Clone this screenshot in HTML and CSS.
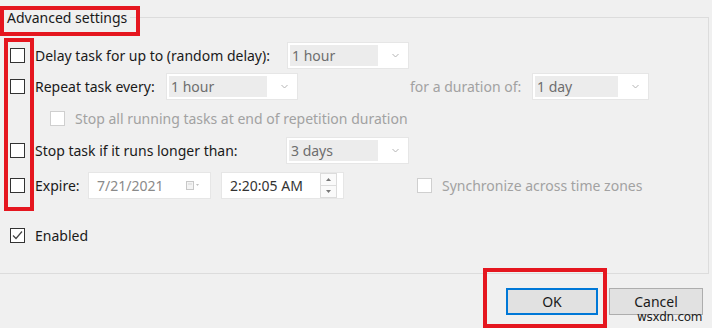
FILE: index.html
```html
<!DOCTYPE html>
<html>
<head>
<meta charset="utf-8">
<link rel="stylesheet" href="styles.css">
</head>
<body>
<div class="dialog">
  <div class="group">
    <div class="legend">Advanced settings</div>

    <div class="row row1">
      <span class="cb"></span>
      <span class="lbl lbl-delay">Delay task for up to (random delay):</span>
      <div class="combo combo-delay"><span class="val">1 hour</span><svg class="chev" width="7" height="5" viewBox="0 0 7 5"><path d="M0.5 1 L3.5 4 L6.5 1" fill="none" stroke="#b4b4b4" stroke-width="1"/></svg></div>
    </div>

    <div class="row row2">
      <span class="cb"></span>
      <span class="lbl lbl-repeat">Repeat task every:</span>
      <div class="combo combo-repeat"><span class="val">1 hour</span><svg class="chev" width="7" height="5" viewBox="0 0 7 5"><path d="M0.5 1 L3.5 4 L6.5 1" fill="none" stroke="#b4b4b4" stroke-width="1"/></svg></div>
      <span class="lbl dim lbl-for">for a duration of:</span>
      <div class="combo combo-day"><span class="val">1 day</span><svg class="chev" width="7" height="5" viewBox="0 0 7 5"><path d="M0.5 1 L3.5 4 L6.5 1" fill="none" stroke="#b4b4b4" stroke-width="1"/></svg></div>
    </div>

    <div class="row row3">
      <span class="cb cb-dis"></span>
      <span class="lbl dim">Stop all running tasks at end of repetition duration</span>
    </div>

    <div class="row row4">
      <span class="cb"></span>
      <span class="lbl lbl-stop">Stop task if it runs longer than:</span>
      <div class="combo combo-stop"><span class="val">3 days</span><svg class="chev" width="7" height="5" viewBox="0 0 7 5"><path d="M0.5 1 L3.5 4 L6.5 1" fill="none" stroke="#b4b4b4" stroke-width="1"/></svg></div>
    </div>

    <div class="row row5">
      <span class="cb"></span>
      <span class="lbl lbl-expire">Expire:</span>
      <div class="field date"><span class="dval">7/21/2021</span>
        <svg class="cal" width="14" height="9" viewBox="0 0 14 9"><rect x="0.5" y="0.5" width="7" height="8" fill="#f4f4f4" stroke="#c8c8c8"/><line x1="2" y1="3" x2="6" y2="3" stroke="#d6d6d6"/><path d="M10 3 L13 3 L11.5 5 Z" fill="#c0c0c0"/></svg>
      </div>
      <div class="field time"><span class="tval">2:20:05 AM</span>
        <div class="spin"><span class="sp"><svg width="5" height="3" viewBox="0 0 5 3"><path d="M0 3 L2.5 0 L5 3 Z" fill="#777"/></svg></span><span class="sp"><svg width="5" height="3" viewBox="0 0 5 3"><path d="M0 0 L2.5 3 L5 0 Z" fill="#777"/></svg></span></div>
      </div>
      <span class="cb cb-dis cb-sync"></span>
      <span class="lbl dim">Synchronize across time zones</span>
    </div>

    <div class="row row6">
      <span class="cb cb-on"><svg width="13" height="13" viewBox="0 0 13 13"><path d="M2 6.5 L5 9.5 L11 2.5" fill="none" stroke="#444" stroke-width="1.2"/></svg></span>
      <span class="lbl">Enabled</span>
    </div>
  </div>

  <div class="footer">
    <button class="btn btn-ok">OK</button>
    <button class="btn">Cancel</button>
  </div>

  <span class="watermark">wsxdn.com</span>
  <div class="mark mark-title"></div>
  <div class="mark mark-checks"></div>
  <div class="mark mark-ok"></div>
</div>
</body>
</html>
```

FILE: styles.css
```css
html, body {
  margin: 0;
  padding: 0;
  background: #f0f0f0;
}
body {
  font-family: "Noto Sans", "Open Sans", "DejaVu Sans", sans-serif;
  font-size: 14px;
  color: #1a1a1a;
}
.dialog {
  position: relative;
  width: 712px;
  height: 328px;
  overflow: hidden;
}
.group {
  position: relative;
  box-sizing: border-box;
  margin-top: 17px;
  width: 709px;
  height: 257px;
  border-top: 1px solid #dcdcdc;
  border-right: 1px solid #dcdcdc;
  border-bottom: 1px solid #dcdcdc;
  padding-top: 24px;
}
.legend {
  position: absolute;
  left: 4px;
  top: -10px;
  padding: 0 3px;
  background: #f0f0f0;
  line-height: 20px;
  color: #1a1a1a;
}
.row {
  display: flex;
  align-items: center;
  height: 27px;
  padding-left: 10px;
}
.row2 { margin-top: 4px; }
.row3 { margin-top: 5px; padding-left: 50px; }
.row4 { margin-top: 5px; }
.row5 { margin-top: 8px; }
.row6 { margin-top: 23px; }

.cb {
  box-sizing: border-box;
  width: 15px;
  height: 15px;
  border: 1px solid #333;
  background: #fff;
  margin-right: 10px;
  flex: none;
  display: flex;
  align-items: center;
  justify-content: center;
}
.cb-dis {
  border-color: #cfcfcf;
  background: #fff;
}
.lbl {
  white-space: nowrap;
  flex: none;
}
.dim { color: #a2a2a2; }
.lbl-delay { width: 252px; }
.lbl-repeat { width: 131px; }
.lbl-for { width: 122px; margin-left: 112px; }
.lbl-stop { width: 251px; }
.lbl-expire { width: 53px; }

.combo {
  box-sizing: border-box;
  height: 27px;
  background: #fff;
  border: 1px solid #e6e6e6;
  display: flex;
  align-items: center;
  padding: 2px;
  flex: none;
}
.combo .val {
  height: 100%;
  display: flex;
  align-items: center;
  background: #ececec;
  color: #6e6e6e;
  padding-left: 2px;
  flex: 1;
}
.combo .chev {
  flex: none;
  margin: 0 7px 0 14px;
}
.combo-delay { width: 122px; }
.combo-repeat { width: 132px; }
.combo-day { width: 117px; }
.combo-stop { width: 123px; }

.field {
  box-sizing: border-box;
  height: 27px;
  width: 123px;
  background: #fff;
  border: 1px solid #e6e6e6;
  display: flex;
  align-items: center;
  flex: none;
}
.date { padding-left: 8px; }
.date .dval { color: #8a8a8a; flex: 1; }
.date .cal { margin-right: 10px; }
.time { margin-left: 10px; padding-left: 8px; }
.time .tval { color: #333; flex: 1; }
.spin {
  display: flex;
  flex-direction: column;
  width: 15px;
  margin-right: 6px;
  border: 1px solid #dcdcdc;
}
.sp {
  height: 11px;
  display: flex;
  align-items: center;
  justify-content: center;
  background: #fafafa;
}
.sp + .sp { border-top: 1px solid #dcdcdc; }
.cb-sync { margin-left: 73px; }

.footer {
  display: flex;
  justify-content: flex-end;
  gap: 11px;
  padding: 14px 9px 0 0;
}
.btn {
  box-sizing: border-box;
  width: 94px;
  height: 27px;
  background: #e1e1e1;
  border: 1px solid #adadad;
  font-family: "Noto Sans", "Open Sans", sans-serif;
  font-size: 14px;
  color: #1a1a1a;
  padding: 0;
}
.btn-ok {
  width: 92px;
  border: 2px solid #0078d7;
}
.watermark {
  position: absolute;
  left: 637px;
  top: 310px;
  font-family: "DejaVu Sans", sans-serif;
  font-size: 12px;
  line-height: 14px;
  color: #222;
  letter-spacing: -0.3px;
}
.mark {
  position: absolute;
  box-sizing: border-box;
  border: 4px solid #e5161f;
}
.mark-title { left: 0; top: 6px; width: 140px; height: 30px; }
.mark-checks { left: 4px; top: 38px; width: 30px; height: 173px; }
.mark-ok { left: 483px; top: 268px; width: 124px; height: 60px; }
```
